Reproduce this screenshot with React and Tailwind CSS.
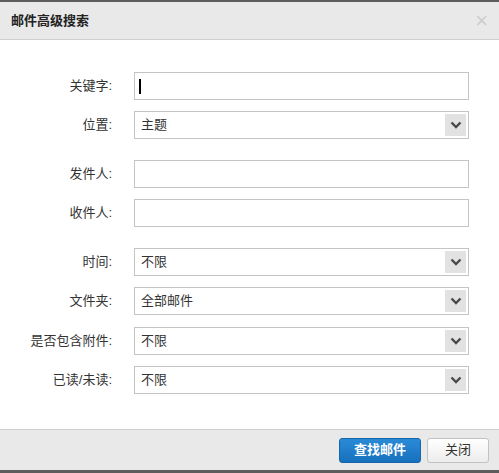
const font = { fontFamily: '"Liberation Sans", "Noto Sans CJK SC", sans-serif' };

function Chevron() {
  return (
    <svg width="12" height="8" viewBox="0 0 12 8">
      <path d="M1.5 1.5 L6 6 L10.5 1.5" fill="none" stroke="#4a4a4a" strokeWidth="2.4" />
    </svg>
  );
}

function Row({ label, value, select, cursor, mt }) {
  return (
    <div className={`flex items-center ${mt}`}>
      <div className="w-[114px] pr-[2px] text-right text-[13px] text-[#333]">{label}</div>
      <div className="ml-[20px] flex h-[28px] w-[335px] items-center border border-[#c4c4c4] bg-white">
        {cursor && <div className="ml-[4px] h-[15px] w-[2px] bg-black" />}
        {!cursor && <span className="flex-1 pl-[6px] text-[13px] text-[#333]">{value}</span>}
        {select && (
          <div className="mr-[2px] flex h-[22px] w-[21px] items-center justify-center bg-[#e2e2e2]">
            <Chevron />
          </div>
        )}
      </div>
    </div>
  );
}

export default function App() {
  return (
    <div className="flex h-[473px] w-[499px] flex-col bg-white" style={font}>
      <div className="h-[2px] bg-[#5c5c5c]" />
      <div className="flex h-[38px] items-center justify-between border-b border-[#cfcfcf] bg-[#e9e9e9] pl-[11px] pr-[11px]">
        <span className="text-[13px] font-bold text-[#222]">邮件高级搜索</span>
        <span className="text-[22px] leading-none text-[#cdcdcd]">×</span>
      </div>
      <div className="flex-1 pt-[32px]">
        <Row label="关键字:" cursor mt="" />
        <Row label="位置:" value="主题" select mt="mt-[11px]" />
        <Row label="发件人:" value="" mt="mt-[21px]" />
        <Row label="收件人:" value="" mt="mt-[11px]" />
        <Row label="时间:" value="不限" select mt="mt-[21px]" />
        <Row label="文件夹:" value="全部邮件" select mt="mt-[11px]" />
        <Row label="是否包含附件:" value="不限" select mt="mt-[12px]" />
        <Row label="已读/未读:" value="不限" select mt="mt-[11px]" />
      </div>
      <div className="flex h-[41px] items-center justify-end gap-[6px] border-t border-[#cfcfcf] bg-[#e9e9e9] pr-[10px]">
        <button className="h-[25px] w-[82px] rounded-[3px] border border-[#1566a8] bg-gradient-to-b from-[#2a8ad6] to-[#1671bd] text-[13px] font-bold text-white">
          查找邮件
        </button>
        <button className="h-[25px] w-[62px] rounded-[3px] border border-[#c2c2c2] bg-gradient-to-b from-[#ffffff] to-[#ececec] text-[13px] text-[#333]">
          关闭
        </button>
      </div>
      <div className="h-[3px] bg-[#5c5c5c]" />
    </div>
  );
}
